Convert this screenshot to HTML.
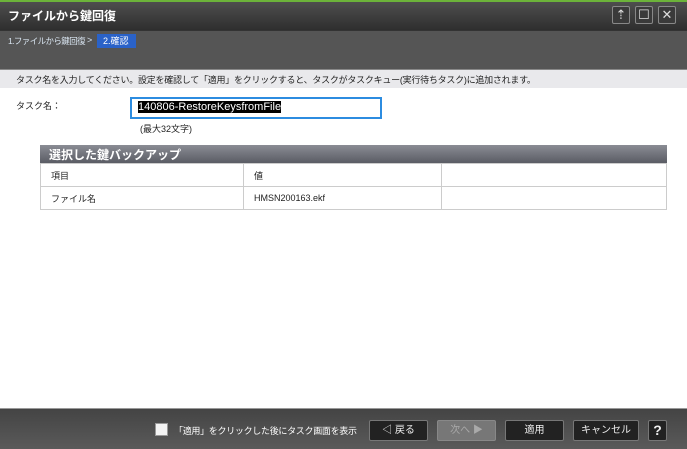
<!DOCTYPE html>
<html><head><meta charset="utf-8"><style>
*{margin:0;padding:0;box-sizing:border-box}
body{width:687px;height:449px;overflow:hidden;font-family:"Liberation Sans","Noto Sans CJK JP",sans-serif;font-size:9px;background:#fff;position:relative;color:#222}
.a{position:absolute;white-space:nowrap}
.btn{position:absolute;top:420px;height:21px;background:#222;border:1px solid #777;border-radius:2px;color:#eee;font-size:10px;text-align:center;line-height:19px}
.wb{position:absolute;top:6px;width:18px;height:18px;border:1px solid #888;background:#3a3a3a;color:#ddd;text-align:center;line-height:15px;font-size:13px;border-radius:2px}
td{border:1px solid #ccc;padding-left:10px;height:23px;font-size:9px}
</style></head><body>
<div class="a" style="left:0;top:0;width:687px;height:2px;background:#6cb33a"></div>
<div class="a" style="left:0;top:2px;width:687px;height:28px;background:linear-gradient(#4e4e4e,#2e2e2e)"></div>
<div class="a" style="left:8px;top:7px;color:#fff;font-size:12px;font-weight:bold">ファイルから鍵回復</div>
<div class="wb" style="left:612px">⇡</div>
<div class="wb" style="left:635px">☐</div>
<div class="wb" style="left:658px">✕</div>
<div class="a" style="left:0;top:30px;width:687px;height:39px;background:#555;border-top:1px solid #333"></div>
<div class="a" style="left:8px;top:35px;color:#d8e4f0;font-size:8.5px;letter-spacing:-0.6px">1.ファイルから鍵回復</div>
<div class="a" style="left:87px;top:35px;color:#d8e4f0">&gt;</div>
<div class="a" style="left:97px;top:34px;width:39px;height:14px;background:#2a62c8;color:#fff;padding-left:6px;line-height:14px">2.確認</div>
<div class="a" style="left:0;top:69px;width:687px;height:19px;background:#e9e9ec;border-top:1px solid #888;padding:3px 0 0 16px;letter-spacing:-0.25px">タスク名を入力してください。設定を確認して「適用」をクリックすると、タスクがタスクキュー(実行待ちタスク)に追加されます。</div>
<div class="a" style="left:16px;top:99px">タスク名：</div>
<div class="a" style="left:130px;top:97px;width:252px;height:22px;border:2px solid #2c8ce0;padding:2px 6px"><span style="background:#000;color:#fff;font-size:11px">140806-RestoreKeysfromFile</span></div>
<div class="a" style="left:140px;top:122px">(最大32文字)</div>
<div class="a" style="left:40px;top:145px;width:627px;height:18px;background:linear-gradient(#8a8c94,#5a5c64);color:#fff;font-weight:bold;font-size:12px;padding:1px 0 0 9px">選択した鍵バックアップ</div>
<table class="a" style="left:40px;top:163px;width:627px;border-collapse:collapse">
<tr><td style="width:203px">項目</td><td style="width:198px">値</td><td></td></tr>
<tr><td>ファイル名</td><td>HMSN200163.ekf</td><td></td></tr>
</table>
<div class="a" style="left:0;top:408px;width:687px;height:41px;background:linear-gradient(#444,#5a5a5a);border-top:1px solid #999"></div>
<div class="a" style="left:155px;top:423px;width:13px;height:13px;background:#f4f4f4;border:1px solid #999"></div>
<div class="a" style="left:174px;top:424px;color:#fff;letter-spacing:-0.3px">「適用」をクリックした後にタスク画面を表示</div>
<div class="btn" style="left:369px;width:59px">◁ 戻る</div>
<div class="btn" style="left:437px;width:59px;background:#777;border-color:#888;color:#aaa">次へ ▶</div>
<div class="btn" style="left:505px;width:59px">適用</div>
<div class="btn" style="left:573px;width:66px">キャンセル</div>
<div class="btn" style="left:648px;width:19px;font-weight:bold;font-size:14px;line-height:18px">?</div>
</body></html>
